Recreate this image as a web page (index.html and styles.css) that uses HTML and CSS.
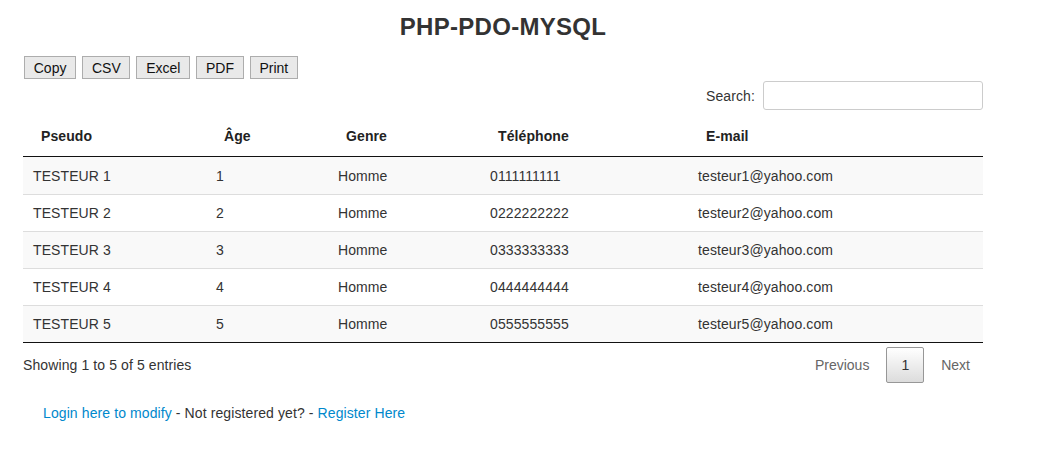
FILE: index.html
```html
<!DOCTYPE html>
<html lang="fr">
<head>
<meta charset="utf-8">
<title>PHP-PDO-MYSQL</title>
<link rel="stylesheet" href="styles.css">
</head>
<body>
<div class="container">
  <h2 class="title">PHP-PDO-MYSQL</h2>
  <div class="buttons">
    <button class="dt-button">Copy</button>
    <button class="dt-button">CSV</button>
    <button class="dt-button">Excel</button>
    <button class="dt-button">PDF</button>
    <button class="dt-button">Print</button>
  </div>
  <div class="filter">
    <label class="filter-label">Search:</label>
    <input class="filter-input" type="search">
  </div>
  <table class="data">
    <colgroup>
      <col class="c1"><col class="c2"><col class="c3"><col class="c4"><col class="c5">
    </colgroup>
    <thead>
      <tr><th>Pseudo</th><th>Âge</th><th>Genre</th><th>Téléphone</th><th>E-mail</th></tr>
    </thead>
    <tbody>
      <tr class="odd"><td>TESTEUR 1</td><td>1</td><td>Homme</td><td>0111111111</td><td>testeur1@yahoo.com</td></tr>
      <tr class="even"><td>TESTEUR 2</td><td>2</td><td>Homme</td><td>0222222222</td><td>testeur2@yahoo.com</td></tr>
      <tr class="odd"><td>TESTEUR 3</td><td>3</td><td>Homme</td><td>0333333333</td><td>testeur3@yahoo.com</td></tr>
      <tr class="even"><td>TESTEUR 4</td><td>4</td><td>Homme</td><td>0444444444</td><td>testeur4@yahoo.com</td></tr>
      <tr class="odd"><td>TESTEUR 5</td><td>5</td><td>Homme</td><td>0555555555</td><td>testeur5@yahoo.com</td></tr>
    </tbody>
  </table>
  <div class="table-footer">
    <div class="info">Showing 1 to 5 of 5 entries</div>
    <div class="paginate">
      <span class="page-btn disabled">Previous</span>
      <span class="page-btn current">1</span>
      <span class="page-btn disabled">Next</span>
    </div>
  </div>
  <p class="links"><a href="#">Login here to modify</a> - Not registered yet? - <a href="#">Register Here</a></p>
</div>
</body>
</html>
```
FILE: styles.css
```css
body {
  margin: 8px;
  font-family: "Liberation Sans", Arial, sans-serif;
  font-size: 14px;
  line-height: 20px;
  letter-spacing: 0.1px;
  color: #333;
  background: #fff;
}
.container {
  width: 960px;
  padding: 5px 15px 0;
}
.title {
  margin: 0;
  font-size: 24px;
  line-height: 28px;
  font-weight: bold;
  letter-spacing: 0.3px;
  text-align: center;
  color: #333;
}
.buttons {
  margin-top: 15px;
  display: flex;
  gap: 6px;
  padding-left: 1px;
}
.dt-button {
  height: 23px;
  padding: 0 8.75px;
  font-family: "Liberation Sans", Arial, sans-serif;
  font-size: 14px;
  letter-spacing: 0;
  color: #111;
  background: #e9e9e9;
  border: 1px solid #adadad;
  border-radius: 0;
}
.filter {
  margin-top: 2px;
  display: flex;
  justify-content: flex-end;
  align-items: center;
  gap: 8px;
}
.filter-input {
  box-sizing: border-box;
  width: 220px;
  height: 29px;
  border: 1px solid #ccc;
  border-radius: 3px;
  padding: 4px 6px;
  margin: 0;
}
.data {
  margin-top: 6px;
  width: 960px;
  border-collapse: separate;
  border-spacing: 0;
  table-layout: fixed;
  border-bottom: 1px solid #111;
}
.c1 { width: 183px; }
.c2 { width: 122px; }
.c3 { width: 152px; }
.c4 { width: 208px; }
.c5 { width: 295px; }
.data th {
  text-align: left;
  font-weight: bold;
  padding: 10px 18px;
  border-bottom: 1px solid #111;
  color: #222;
}
.data td {
  padding: 8px 10px;
  border-top: 1px solid #ddd;
}
.data tbody tr:first-child td {
  border-top-color: transparent;
}
.data tr.odd td {
  background: #f9f9f9;
}
.data tr.even td {
  background: #fff;
}
.table-footer {
  display: flex;
  justify-content: space-between;
  align-items: center;
  padding-top: 4px;
}
.paginate {
  display: flex;
  letter-spacing: 0;
  margin-right: -2px;
}
.page-btn {
  box-sizing: border-box;
  padding: 7px 14px;
  margin-left: 2px;
  border: 1px solid transparent;
  border-radius: 2px;
  min-width: 21px;
  text-align: center;
  color: #333;
}
.page-btn.disabled {
  color: #666;
}
.page-btn.current {
  border: 1px solid #979797;
  background: linear-gradient(to bottom, #fff 0%, #dcdcdc 100%);
}
.links {
  margin: 20px 0 0;
  padding-left: 20px;
}
.links a {
  color: #0088cc;
  text-decoration: none;
}
```
